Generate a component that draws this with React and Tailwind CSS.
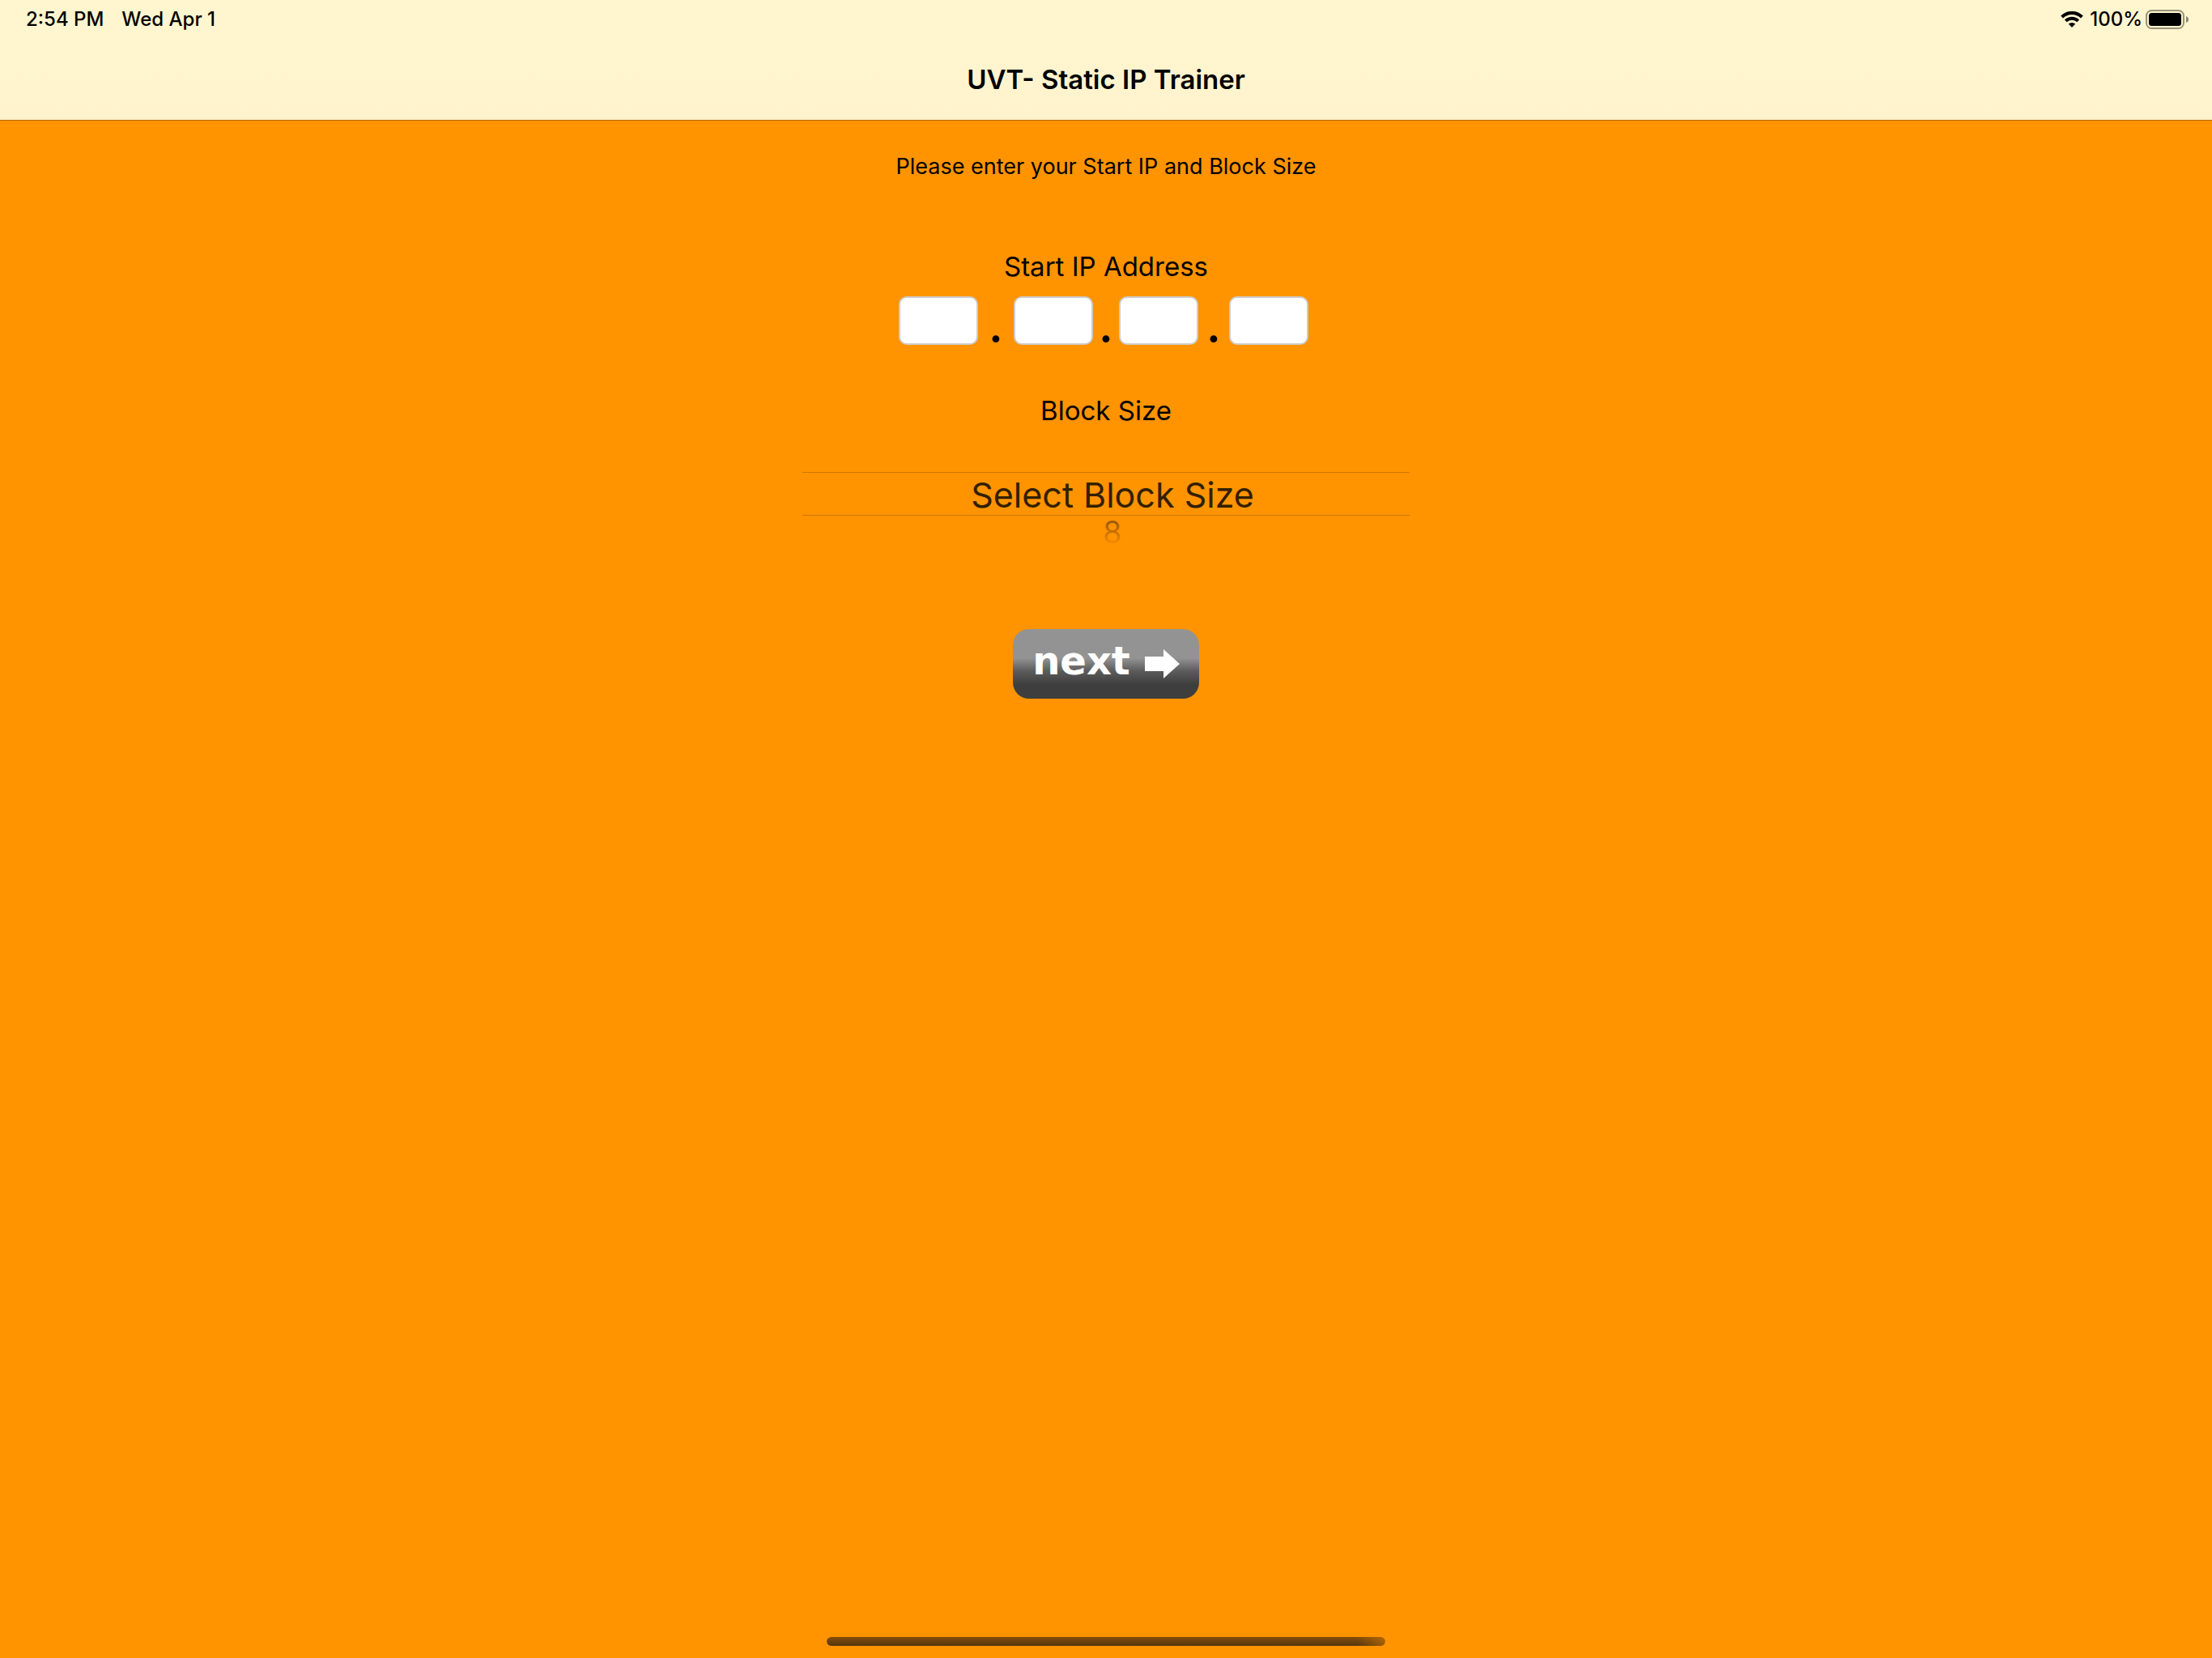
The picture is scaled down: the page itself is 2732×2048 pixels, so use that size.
import { useState } from 'react';

const blockSizes = ['Select Block Size', '8', '16', '32', '64', '128'];

const WifiIcon = () => (
  <svg width="28" height="20" viewBox="0 0 28 20" aria-hidden="true">
    <path
      d="M1.6 7 A17.6 17.6 0 0 1 26.4 7"
      fill="none"
      stroke="black"
      strokeWidth="4"
    />
    <path
      d="M6.3 11.9 A11 11 0 0 1 21.7 11.9"
      fill="none"
      stroke="black"
      strokeWidth="3.8"
    />
    <path d="M9.8 15.6 A6 6 0 0 1 18.2 15.6 L14 20 Z" fill="black" />
  </svg>
);

const BatteryIcon = () => (
  <svg width="54" height="24" viewBox="0 0 54 24" aria-hidden="true">
    <rect
      x="1"
      y="1"
      width="46"
      height="22"
      rx="6.5"
      fill="none"
      stroke="black"
      strokeOpacity="0.4"
      strokeWidth="2"
    />
    <rect x="4" y="4" width="40" height="16" rx="3.5" fill="black" />
    <path d="M50 8 Q53 9 53 12 Q53 15 50 16 Z" fill="black" fillOpacity="0.45" />
  </svg>
);

const StatusBar = () => (
  <div className="flex items-center justify-between h-12 pl-8 pr-7 text-2xl font-medium">
    <div className="flex gap-[22px]">
      <span>2:54 PM</span>
      <span>Wed Apr 1</span>
    </div>
    <div className="flex items-center gap-2">
      <WifiIcon />
      <div className="flex items-center gap-1">
        <span>100%</span>
        <BatteryIcon />
      </div>
    </div>
  </div>
);

const Octet = ({ label, value, onChange }) => (
  <input
    type="text"
    inputMode="numeric"
    maxLength={3}
    aria-label={label}
    value={value}
    onChange={(e) => onChange(e.target.value)}
    className="w-[98px] h-[60px] rounded-[10px] border-2 border-[#cccccc] bg-white text-center text-[27px] font-normal outline-none"
  />
);

const App = () => {
  const [octets, setOctets] = useState(['', '', '', '']);
  const [selected, setSelected] = useState(0);

  const setOctet = (index, value) =>
    setOctets(octets.map((octet, i) => (i === index ? value : octet)));

  return (
    <div className="flex flex-col min-h-screen bg-[#ff9300] text-black font-['Inter',sans-serif]">
      <header className="bg-linear-to-b from-[#fff6cf] to-[#fff3cd] border-b border-[#b36a0c]">
        <StatusBar />
        <h1 className="h-[100px] text-center text-[33px] leading-[100px] font-semibold">
          UVT- Static IP Trainer
        </h1>
      </header>

      <main className="flex flex-1 flex-col items-center">
        <p className="mt-10 text-[27px] leading-[34px]">
          Please enter your Start IP and Block Size
        </p>

        <h2 className="mt-[86px] text-[33px] leading-10">Start IP Address</h2>
        <div className="flex items-start h-[60px] mt-[17px] pr-1.5 text-center text-[56px] leading-[74px] font-semibold">
          <Octet
            label="First octet"
            value={octets[0]}
            onChange={(value) => setOctet(0, value)}
          />
          <span className="w-11">.</span>
          <Octet
            label="Second octet"
            value={octets[1]}
            onChange={(value) => setOctet(1, value)}
          />
          <span className="w-8">.</span>
          <Octet
            label="Third octet"
            value={octets[2]}
            onChange={(value) => setOctet(2, value)}
          />
          <span className="w-[38px]">.</span>
          <Octet
            label="Fourth octet"
            value={octets[3]}
            onChange={(value) => setOctet(3, value)}
          />
        </div>

        <label htmlFor="block-size" className="mt-[61px] text-[33px] leading-10">
          Block Size
        </label>
        <div className="w-[750px] mt-14 text-center">
          <select
            id="block-size"
            value={selected}
            onChange={(e) => setSelected(Number(e.target.value))}
            className="block w-full h-[54px] pt-0.5 pl-4 appearance-none border-y border-[#cc7600] bg-transparent text-[43px] leading-[50px] text-[#332000] [text-align-last:center] outline-none"
          >
            {blockSizes.map((size, i) => (
              <option key={size} value={i}>
                {size}
              </option>
            ))}
          </select>
          <div className="h-10 pl-4 text-[38px] leading-10 bg-linear-to-b from-[#995800] from-15% to-[#f58d00] to-85% bg-clip-text text-transparent">
            {blockSizes[selected + 1]}
          </div>
        </div>

        <button
          type="button"
          className="flex items-center gap-[18px] h-[86px] mt-[100px] px-6 rounded-[20px] bg-linear-to-b from-[#939393] from-42% via-[#5c5c5c] via-60% to-[#3e3e3e] to-80% text-white"
        >
          <span className="pb-2 font-['DejaVu_Sans',sans-serif] text-[48px] leading-[78px] font-bold">
            next
          </span>
          <svg width="43" height="36" viewBox="0 0 43 36" aria-hidden="true">
            <path d="M0 9 H23 V0 L43 18 L23 36 V27 H0 Z" fill="white" />
          </svg>
        </button>
      </main>

      <div className="self-center w-[690px] h-[11px] mb-[15px] rounded-full bg-linear-to-b from-[#854e0a] to-[#55350e] [mask-image:linear-gradient(to_right,black_95%,rgb(0_0_0/0.6))]" />
    </div>
  );
};

export default App;
